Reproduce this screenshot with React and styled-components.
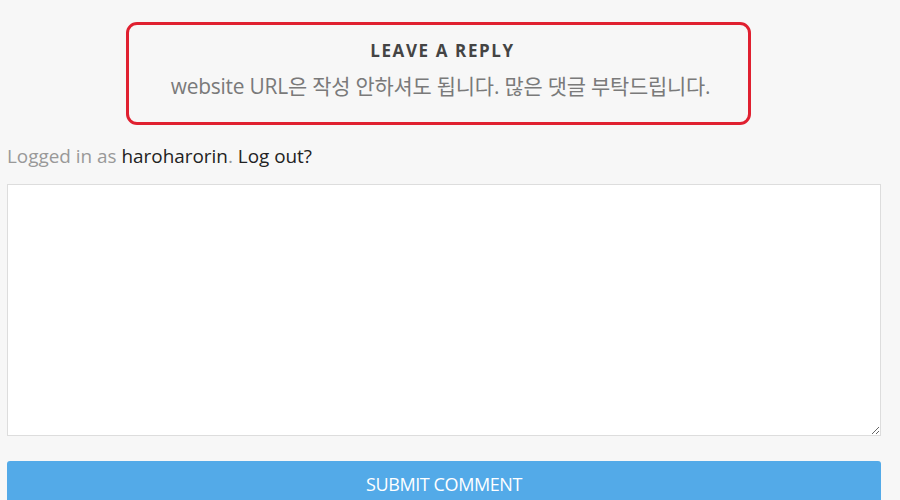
import styled, { createGlobalStyle } from "styled-components";

const GlobalStyle = createGlobalStyle`
  html, body {
    margin: 0;
    padding: 0;
    background: #f7f7f7;
    font-family: "Open Sans", "Noto Sans CJK KR", sans-serif;
  }
`;

const Page = styled.div`
  width: 874px;
  padding: 22px 7px 0;
`;

const Notice = styled.div`
  width: 619px;
  margin-left: 119px;
  height: 97px;
  border: 3px solid #e02030;
  border-radius: 11px;
  display: flex;
  flex-direction: column;
  align-items: center;
  box-sizing: content-box;
`;

const Title = styled.h3`
  margin: 14px 0 0 8px;
  font-size: 17px;
  font-weight: 700;
  letter-spacing: 1.6px;
  color: #444;
  line-height: 24px;
`;

const Sub = styled.p`
  margin: 9px 0 0 4px;
  font-size: 20.9px;
  color: #7a7a7a;
  line-height: 28px;
  letter-spacing: -0.2px;
`;

const LoggedIn = styled.p`
  margin: 18px 0 0;
  font-size: 18.9px;
  line-height: 26px;
  color: #999;
`;

const Link = styled.a`
  color: #222;
  text-decoration: none;
`;

const TextArea = styled.textarea`
  display: block;
  margin-top: 15px;
  width: 874px;
  height: 252px;
  box-sizing: border-box;
  border: 1px solid #ddd;
  background: #fff;
  resize: both;
  outline: none;
`;

const Submit = styled.button`
  display: block;
  margin-top: 25px;
  width: 874px;
  height: 48px;
  border: none;
  border-radius: 3px;
  background: #53aae8;
  color: #fff;
  font-family: "Open Sans", sans-serif;
  font-size: 18px;
  letter-spacing: -0.4px;
  padding: 0 0 3px;
`;

export default function App() {
  return (
    <>
      <GlobalStyle />
      <Page>
        <Notice>
          <Title>LEAVE A REPLY</Title>
          <Sub>website URL은 작성 안하셔도 됩니다. 많은 댓글 부탁드립니다.</Sub>
        </Notice>
        <LoggedIn>
          Logged in as <Link href="#">haroharorin</Link>. <Link href="#">Log out?</Link>
        </LoggedIn>
        <TextArea />
        <Submit>SUBMIT COMMENT</Submit>
      </Page>
    </>
  );
}
